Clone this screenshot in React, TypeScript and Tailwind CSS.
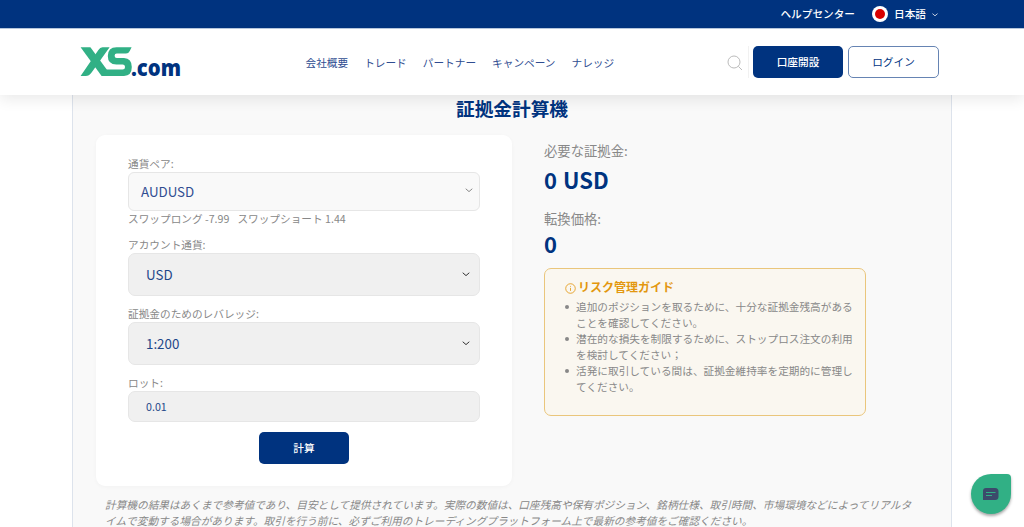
import React, {useState} from 'react';

const navItems = ["会社概要", "トレード", "パートナー", "キャンペーン", "ナレッジ"];

const riskItems = [
    "追加のポジションを取るために、十分な証拠金残高があることを確認してください。",
    "潜在的な損失を制限するために、ストップロス注文の利用を検討してください；",
    "活発に取引している間は、証拠金維持率を定期的に管理してください。",
];

const Chevron = ({className}: { className: string }) => (
    <svg viewBox="0 0 8 5" fill="none" stroke="currentColor" strokeLinecap="round" strokeLinejoin="round"
         className={className}>
        <path d="M1 1l3 2.6L7 1"/>
    </svg>
);

const Logo = () => (
    <svg viewBox="0 0 102 40" className="w-[102px] h-[40px] mt-[8px] overflow-visible">
        <g fill="#31b085">
            <path d="M0.6 1.2H10.4L31.5 30H21.6Z"/>
            <path d="M22.5 1.2H29.6L11.6 26.5Q9 30 5.8 30H0.6L18.4 4Q20 1.2 22.5 1.2Z"/>
            <path d="M21.6 30L26.6 23.6H42.6Q45 23.6 45 21.2Q45 18.6 42.6 18.6H36.4Q27.8 18.2 27.8 9.9Q27.8 1.4 36.5 1.2H51.6L49.6 5.2Q48.6 7.4 46 7.4H36.8Q34.6 7.4 34.6 9.8Q34.6 12 36.8 12H44Q51.8 12.4 51.8 21Q51.8 29.6 44 30Z"/>
        </g>
        <text x="51" y="29.6" textLength="50" lengthAdjust="spacingAndGlyphs" fill="#00337f" fontWeight="800"
              fontSize="23" fontFamily="Open Sans, sans-serif">.com</text>
    </svg>
);

const TopBar = () => (
    <div className="h-[28px] bg-[#00337f] text-white font-medium">
        <div className="w-[880px] mx-auto h-full flex items-center justify-end pr-[14px]">
            <span>ヘルプセンター</span>
            <span className="ml-[17px] w-4 h-4 rounded-full bg-white flex items-center justify-center">
                <span className="w-[10px] h-[10px] rounded-full bg-[#d80000]"/>
            </span>
            <span className="ml-[6px]">日本語</span>
            <Chevron className="w-[6px] h-[4px] ml-[6px] mt-[2px]"/>
        </div>
    </div>
);

const Header = () => (
    <header className="relative z-10 h-[67px] bg-white border-t border-[#b5c6dc] shadow-[0_4px_14px_rgba(0,0,0,0.09)]">
        <div className="w-[880px] mx-auto h-full flex items-center pl-2 pr-[13px]">
            <Logo/>
            <nav className="ml-[123.5px] mt-[2px] flex gap-[16px] text-[#304d91]">
                {navItems.map((item) => <a key={item} href="#">{item}</a>)}
            </nav>
            <svg viewBox="0 0 16 16" fill="none" stroke="#bbb" className="ml-auto mt-[2px] w-[16px] h-[16px]">
                <circle cx="7" cy="7" r="6"/>
                <path d="M11.4 11.4L15 15"/>
            </svg>
            <span className="ml-[5px] mr-[4px] w-px h-8 bg-[#f1f1f1]"/>
            <button className="w-[90px] h-8 rounded-[5px] bg-[#00337f] text-white font-medium">口座開設</button>
            <button className="ml-[5px] w-[91px] h-8 rounded-[5px] border border-[#6684b3] text-[#00337f]">ログイン</button>
        </div>
    </header>
);

const CalculatorForm = () => {
    const [lot, setLot] = useState("0.01");

    return (
        <form className="w-[416px] h-[351px] shrink-0 rounded-[9px] bg-white px-8 pt-[21px] shadow-[0_1px_4px_rgba(0,0,0,0.03)]">
            <label className="block h-4">通貨ペア:</label>
            <div className="h-[39px] rounded-md border border-[#e6e6e6] bg-[#f9f9f9] flex items-center justify-between pl-3 pr-[6px] text-[13.33px] text-[#304d91]">
                <span>AUDUSD</span>
                <Chevron className="w-[8px] h-[5px] mb-[3px] text-[#888]"/>
            </div>
            <p className="h-4 flex gap-[8px]">
                <span>スワップロング -7.99</span>
                <span>スワップショート 1.44</span>
            </p>

            <label className="block h-4 mt-[10px]">アカウント通貨:</label>
            <div className="h-[43px] rounded-[7px] border border-[#e6e6e6] bg-[#f0f0f0] flex items-center justify-between pl-[17px] pr-[9px] text-[13.33px] text-[#1e4789]">
                <span>USD</span>
                <Chevron className="w-[8px] h-[5px] text-[#333]"/>
            </div>

            <label className="block h-4 mt-[10px]">証拠金のためのレバレッジ:</label>
            <div className="h-[43px] rounded-[7px] border border-[#e6e6e6] bg-[#f0f0f0] flex items-center justify-between pl-[17px] pr-[9px] text-[13.33px] text-[#1e4789]">
                <span>1:200</span>
                <Chevron className="w-[8px] h-[5px] text-[#333]"/>
            </div>

            <label className="block h-4 mt-[10px]">ロット:</label>
            <input value={lot} onChange={(e) => setLot(e.target.value)} type="text" name="lot"
                   className="block w-full h-[31px] rounded-[7px] border border-[#e6e6e6] bg-[#f0f0f0] px-[17px] text-[#1e4789]"/>
            <button type="button"
                    className="block mx-auto mt-[10px] w-[90px] h-8 rounded-[5px] bg-[#00337f] text-white font-medium">計算
            </button>
        </form>
    );
};

const Results = () => (
    <div className="w-[322px] ml-8 pt-[6px]">
        <p className="text-[13.33px] leading-5">必要な証拠金:</p>
        <p className="mt-[2px] text-[22px] leading-8 font-bold text-[#00337f] [word-spacing:1px]">0 USD</p>
        <p className="mt-[14px] text-[13.33px] leading-5">転換価格:</p>
        <p className="text-[22px] leading-7 font-bold text-[#00337f]">0</p>
        <div className="mt-[11px] h-[148px] rounded-[7px] border border-[#eac67c] bg-[#faf7f0] pl-5 pr-3 pt-[9px]">
            <h3 className="flex items-center text-xs leading-[18px] font-bold text-[#e3970f]">
                <svg viewBox="0 0 12 12" fill="none" stroke="currentColor" strokeWidth="0.9" className="w-[11px] h-[11px] mr-[2px] mt-[2px]">
                    <circle cx="6" cy="6" r="5.2"/>
                    <path d="M6 5.3V8.6M6 3.2V4.1"/>
                </svg>
                リスク管理ガイド
            </h3>
            <ul className="mt-[3px]">
                {riskItems.map((item) => (
                    <li key={item} className="flex">
                        <span className="mt-[6px] mr-[7px] w-1 h-1 shrink-0 rounded-full bg-[#888]"/>
                        {item}
                    </li>
                ))}
            </ul>
        </div>
    </div>
);

const ChatButton = () => (
    <button className="fixed left-[971px] top-[474px] w-10 h-10 rounded-[20px] rounded-tr-[4px] bg-[#31b085] shadow-[0_2px_3px_rgba(0,0,0,0.35)] flex items-center justify-center">
        <svg viewBox="0 0 16 12" className="w-[16px] h-[12px]">
            <path d="M3 0H12Q15.5 0 15.5 3.5V8.5Q15.5 12 12 12H0V3Q0 0 3 0Z" fill="#3c4a6b"/>
            <path d="M3 4.5H12.5M3 7.5H9" stroke="#31b085"/>
        </svg>
    </button>
);

const App = () => {
    return (
        <div className="h-[527px] overflow-hidden bg-white font-['Noto_Sans_CJK_JP',sans-serif] text-[10.667px] leading-4 text-[#888]">
            <TopBar/>
            <Header/>
            <main className="w-[880px] mx-auto h-[440px] border-x border-[#dde3ec] bg-[#f9f9f9] px-[23px]">
                <h1 className="h-[40px] text-center text-[18.67px] leading-[26px] font-bold text-[#00337f]">証拠金計算機</h1>
                <div className="flex">
                    <CalculatorForm/>
                    <Results/>
                </div>
                <p className="mt-[11px] ml-[9px] w-[812px] italic">
                    計算機の結果はあくまで参考値であり、目安として提供されています。実際の数値は、口座残高や保有ポジション、銘柄仕様、取引時間、市場環境などによってリアルタイムで変動する場合があります。取引を行う前に、必ずご利用のトレーディングプラットフォーム上で最新の参考値をご確認ください。
                </p>
            </main>
            <ChatButton/>
        </div>
    );
};

export default App;
